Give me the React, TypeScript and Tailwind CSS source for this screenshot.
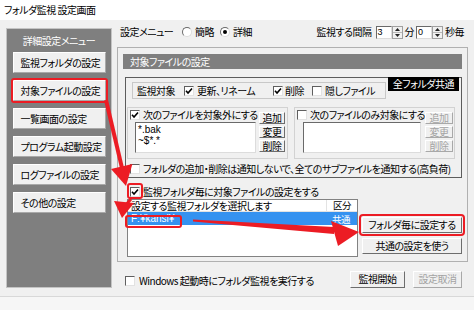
import React from "react";
import clsx from "clsx";

function Check({ checked }: { checked?: boolean }) {
  return (
    <span className="w-[10px] h-[10px] shrink-0 bg-white border border-t-[#5f5f5f] border-l-[#5f5f5f] border-r-[#e2e2e2] border-b-[#e2e2e2] flex items-center justify-center">
      {checked && (
        <svg width="8" height="8" viewBox="0 0 8 8">
          <path d="M1 3.8 L3 6 L7 1.5" fill="none" stroke="#000" strokeWidth="1.6" />
        </svg>
      )}
    </span>
  );
}

function Radio({ checked }: { checked?: boolean }) {
  return (
    <span className="w-[10px] h-[10px] shrink-0 rounded-full bg-white border border-t-[#6a6a6a] border-l-[#6a6a6a] border-r-[#dcdcdc] border-b-[#dcdcdc] flex items-center justify-center">
      {checked && <span className="w-[4px] h-[4px] rounded-full bg-black" />}
    </span>
  );
}

function Btn({
  children,
  className,
  disabled,
}: {
  children: React.ReactNode;
  className?: string;
  disabled?: boolean;
}) {
  return (
    <div
      className={clsx(
        "flex items-center justify-center bg-[#f0f0f0] border border-t-white border-l-white border-r-[#6d6d6d] border-b-[#6d6d6d] text-[10px] leading-none whitespace-nowrap",
        disabled ? "text-[#a3a3a3] border-r-[#a8a8a8] border-b-[#a8a8a8]" : "text-black",
        className
      )}
    >
      {children}
    </div>
  );
}

function Spin({ value }: { value: string }) {
  return (
    <div className="flex h-[13px]">
      <div className="w-[16px] h-[13px] bg-white border border-t-[#6a6a6a] border-l-[#6a6a6a] border-r-[#dcdcdc] border-b-[#dcdcdc] text-[9px] leading-[11px] pl-[1px] tracking-normal font-['Liberation_Sans',sans-serif]">
        {value}
      </div>
      <div className="w-[11px] h-[13px] flex flex-col bg-[#f0f0f0] border border-[#a0a0a0]">
        <div className="flex-1 flex items-center justify-center border-b border-[#b8b8b8]">
          <svg width="5" height="3" viewBox="0 0 5 3"><path d="M0 3 L2.5 0 L5 3Z" fill="#222" /></svg>
        </div>
        <div className="flex-1 flex items-center justify-center">
          <svg width="5" height="3" viewBox="0 0 5 3"><path d="M0 0 L2.5 3 L5 0Z" fill="#222" /></svg>
        </div>
      </div>
    </div>
  );
}

const menu = [
  "監視フォルダの設定",
  "対象ファイルの設定",
  "一覧画面の設定",
  "プログラム起動設定",
  "ログファイルの設定",
  "その他の設定",
];

export default function App() {
  return (
    <div className="w-[474px] h-[310px] bg-[#f0f0f0] relative overflow-hidden text-black tracking-[-0.5px] font-['Noto_Sans_CJK_JP','Noto_Sans',sans-serif] [font-feature-settings:'palt']">
      {/* Title */}
      <div className="h-[20px] bg-white flex items-center pl-[4px] text-[10px] leading-none">
        フォルダ監視 設定画面
      </div>

      {/* Body */}
      <div className="flex h-[276px]">
        {/* Left menu */}
        <div className="ml-[6px] mt-[8px] w-[106px] h-[260px] bg-[#7f7f7f] border border-[#c4c4c4] flex flex-col items-center">
          <div className="mt-[5px] h-[14px] text-white text-[10px] leading-[14px]">詳細設定メニュー</div>
          <div className="mt-[4px] flex flex-col gap-[7px]">
            {menu.map((m, i) => (
              <div key={m} className="relative">
                <Btn className="w-[93px] h-[21px] justify-start pl-[7px] border-r-[#a9a9a9] border-b-[#a9a9a9]">{m}</Btn>
                {i === 1 && (
                  <span className="absolute -left-[2px] -right-[2px] -top-[2px] -bottom-[2px] border-2 border-[#ec1c24] rounded-[3px]" />
                )}
              </div>
            ))}
          </div>
        </div>

        {/* Main column */}
        <div className="ml-[5px] w-[351px] flex flex-col">
          {/* Top row */}
          <div className="mt-[5px] h-[14px] flex items-center text-[10px] leading-none pr-[4px]">
            <span className="pl-[3px] w-[65px]">設定メニュー</span>
            <Radio />
            <span className="ml-[3px] w-[25px]">簡略</span>
            <Radio checked />
            <span className="ml-[3px]">詳細</span>
            <span className="ml-auto mr-[4px]">監視する間隔</span>
            <Spin value="3" />
            <span className="mx-[2px]">分</span>
            <Spin value="0" />
            <span className="ml-[2px]">秒毎</span>
          </div>

          {/* Main panel */}
          <div className="mt-[8px] h-[215px] border border-[#b0b0b0] flex flex-col">
            <div className="mx-[5px] mt-[6px] h-[15px] bg-[#7f7f7f] text-white text-[10px] leading-[15px] pl-[7px]">
              対象ファイルの設定
            </div>

            {/* Inner box */}
            <div className="ml-[7px] mr-[5px] mt-[8px] h-[101px] border border-[#5c5c5c] relative flex flex-col text-[10px] leading-none">
              <div className="absolute right-[2px] -top-[1px] h-[14px] bg-black text-white px-[5px] flex items-center">
                全フォルダ共通
              </div>

              <div className="ml-[6px] mt-[4px] w-[254px] h-[17px] border border-[#c8c8c8] flex items-center">
                <span className="pl-[4px] w-[51px]">監視対象</span>
                <Check checked />
                <span className="ml-[3px] w-[76px]">更新、リネーム</span>
                <Check checked />
                <span className="ml-[2px] w-[27px]">削除</span>
                <Check />
                <span className="ml-[3px]">隠しファイル</span>
              </div>

              <div className="flex mt-[8px] ml-[1px]">
                {/* Exclude group */}
                <div className="w-[161px] h-[52px] border border-[#d2d2d2] flex">
                  <div className="w-[128px] flex flex-col">
                    <div className="ml-[2px] mt-[1px] h-[12px] flex items-center whitespace-nowrap">
                      <Check checked />
                      <span className="ml-[3px]">次のファイルを対象外にする</span>
                    </div>
                    <div className="ml-[7px] mt-[1px] w-[121px] h-[31px] bg-white border border-t-[#6a6a6a] border-l-[#6a6a6a] border-r-[#dcdcdc] border-b-[#dcdcdc] text-[10px] leading-[11px] pl-[2px] pt-[1px] tracking-normal font-['Liberation_Sans',sans-serif]">
                      <div>*.bak</div>
                      <div>~$*.*</div>
                    </div>
                  </div>
                  <div className="ml-[3px] mt-[4px] flex flex-col gap-[2px]">
                    <Btn className="w-[26px] h-[12px]">追加</Btn>
                    <Btn className="w-[26px] h-[12px]">変更</Btn>
                    <Btn className="w-[26px] h-[12px]">削除</Btn>
                  </div>
                </div>

                {/* Include group */}
                <div className="ml-[6px] w-[161px] h-[52px] border border-[#d2d2d2] flex">
                  <div className="w-[128px] flex flex-col">
                    <div className="ml-[2px] mt-[1px] h-[12px] flex items-center whitespace-nowrap">
                      <Check />
                      <span className="ml-[3px]">次のファイルのみ対象にする</span>
                    </div>
                    <div className="ml-[8px] mt-[1px] w-[118px] h-[31px] bg-white border border-t-[#6a6a6a] border-l-[#6a6a6a] border-r-[#dcdcdc] border-b-[#dcdcdc]" />
                  </div>
                  <div className="ml-[2px] mt-[4px] flex flex-col gap-[2px]">
                    <Btn disabled className="w-[28px] h-[12px]">追加</Btn>
                    <Btn disabled className="w-[28px] h-[12px]">変更</Btn>
                    <Btn disabled className="w-[28px] h-[12px]">削除</Btn>
                  </div>
                </div>
              </div>

              <div className="mt-[4px] ml-[4px] h-[12px] flex items-center whitespace-nowrap">
                <Check />
                <span className="ml-[3px]">フォルダの追加・削除は通知しないで、全てのサブファイルを通知する(高負荷)</span>
              </div>
            </div>

            {/* Per folder */}
            <div className="ml-[12px] mt-[8px] h-[12px] flex items-center text-[10px] leading-none whitespace-nowrap">
              <span className="relative">
                <Check checked />
                <span className="absolute -left-[3px] -right-[3px] -top-[4px] -bottom-[2px] border-2 border-[#ec1c24] rounded-[3px]" />
              </span>
              <span className="ml-[3px]">監視フォルダ毎に対象ファイルの設定をする</span>
            </div>

            <div className="flex mt-[1px] ml-[9px] text-[10px] leading-[11px]">
              <div className="w-[231px] h-[58px] bg-white border border-[#828282] relative">
                <div className="h-[12px] flex border-b border-[#e3e3e3]">
                  <div className="w-[199px] pl-[3px] border-r border-[#e3e3e3] flex items-center">設定する監視フォルダを選択します</div>
                  <div className="flex-1 flex items-center justify-center text-[9.5px]">区分</div>
                </div>
                <div className="h-[13px] flex bg-[#3592f0] text-white">
                  <div className="w-[199px] pl-[3px] flex items-center tracking-normal font-['Liberation_Sans','Noto_Sans_CJK_JP',sans-serif]">F:¥kansi¥</div>
                  <div className="flex-1 flex items-end justify-end pr-[7px] text-[9.5px]">共通</div>
                </div>
                <span className="absolute -left-[3px] top-[15px] w-[57px] h-[13px] border-2 border-[#ec1c24] rounded-[3px]" />
              </div>
              <div className="ml-[4px] mt-[18px] flex flex-col gap-[5px]">
                <div className="relative">
                  <Btn className="w-[100px] h-[16px]">フォルダ毎に設定する</Btn>
                  <span className="absolute -inset-[3px] border-2 border-[#ec1c24] rounded-[4px]" />
                </div>
                <Btn className="w-[100px] h-[16px]">共通の設定を使う</Btn>
              </div>
            </div>
          </div>

          {/* Bottom row */}
          <div className="h-[34px] flex items-center text-[10px] leading-none pr-[6px]">
            <span className="ml-[8px] mt-[3px] flex items-center">
              <Check />
              <span className="ml-[4px]">Windows 起動時にフォルダ監視を実行する</span>
            </span>
            <Btn className="ml-auto w-[55px] h-[17px]">監視開始</Btn>
            <Btn disabled className="ml-[8px] w-[49px] h-[17px]">設定取消</Btn>
          </div>
        </div>
      </div>

      <div className="h-[14px] border-t border-[#d8d8d8] bg-[#f6f6f6]" />

      {/* Annotation arrows */}
      <svg className="absolute inset-0 pointer-events-none" width="474" height="310" viewBox="0 0 474 310">
        <line x1="106" y1="100" x2="122" y2="168" stroke="#ec1c24" strokeWidth="4" />
        <polygon points="111,169 132.4,164 126,186" fill="#ec1c24" />
        <line x1="131" y1="199" x2="125" y2="206" stroke="#ec1c24" strokeWidth="3" />
        <polygon points="114,201 134,203 122,218" fill="#ec1c24" />
        <polygon points="193,219.5 334,227 334,234 193,221.5" fill="#ec1c24" />
        <polygon points="331,221 338,246 359,232" fill="#ec1c24" />
      </svg>
    </div>
  );
}
